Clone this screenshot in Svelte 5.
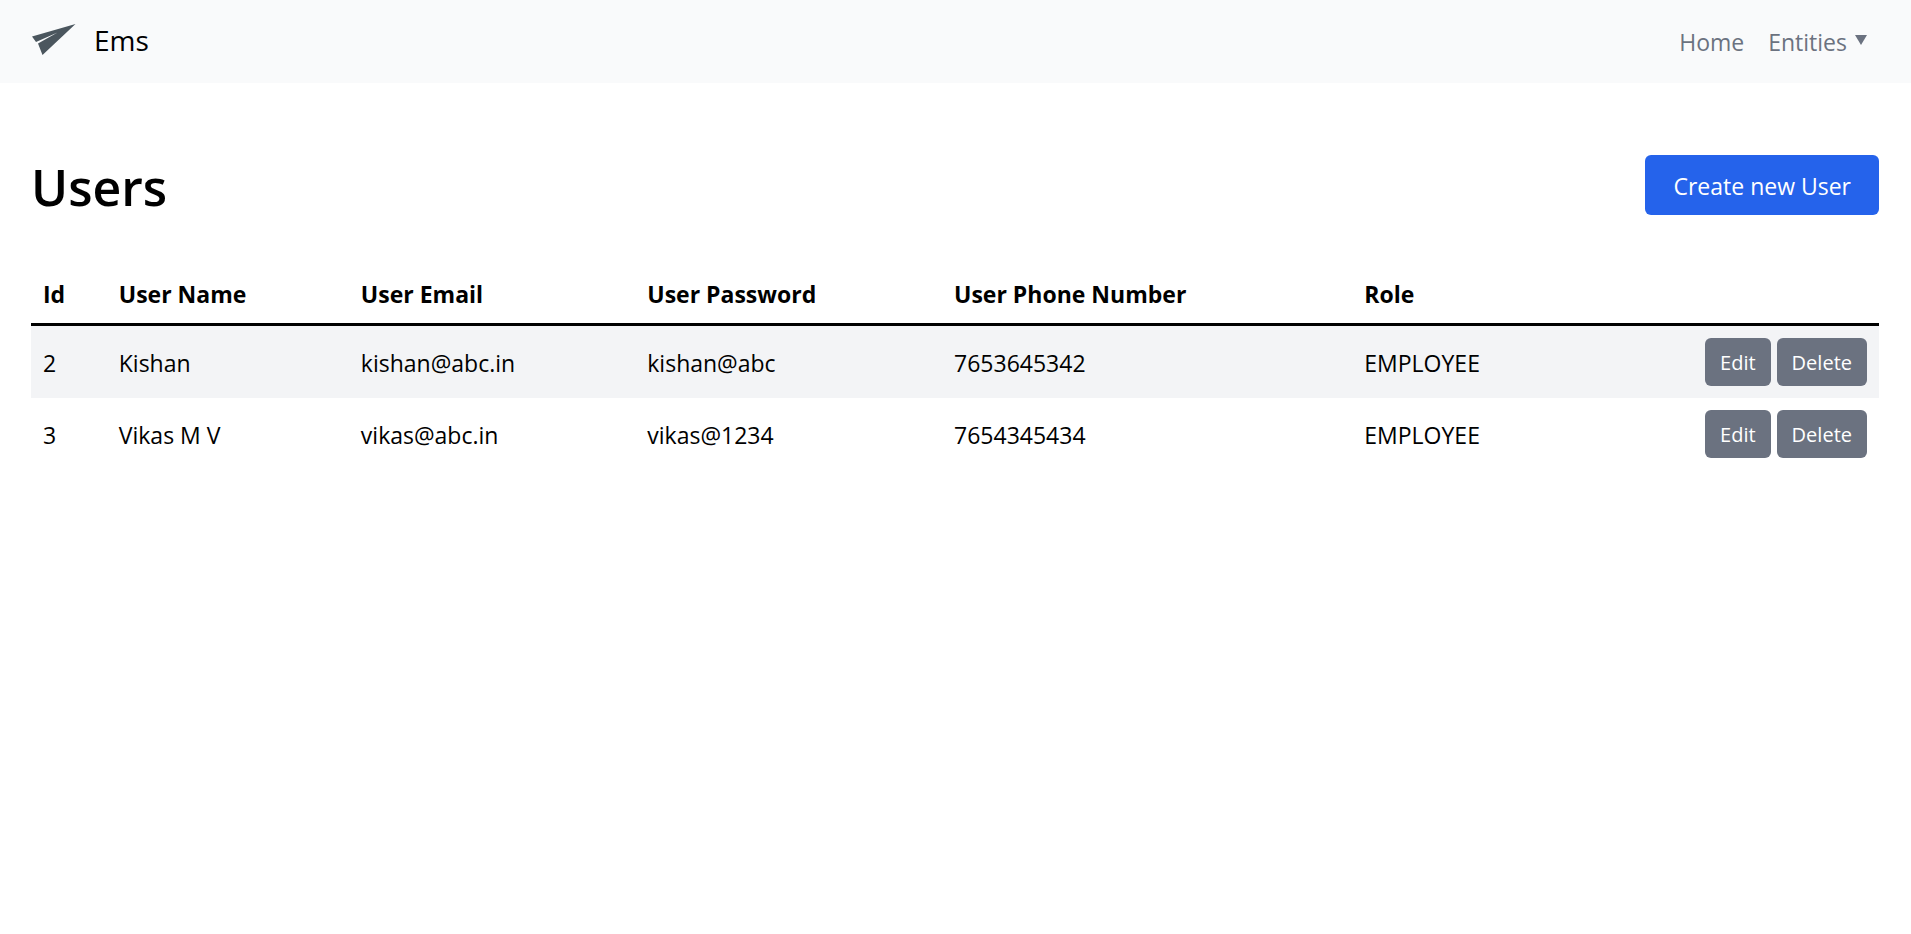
<script>
  const users = [
    { id: 2, name: 'Kishan', email: 'kishan@abc.in', password: 'kishan@abc', phone: '7653645342', role: 'EMPLOYEE' },
    { id: 3, name: 'Vikas M V', email: 'vikas@abc.in', password: 'vikas@1234', phone: '7654345434', role: 'EMPLOYEE' }
  ];
</script>

<header>
  <a class="brand" href="#home">
    <svg width="44" height="32" viewBox="0 0 44 32" aria-hidden="true">
      <path fill="#4b565e" d="M43.500 0 0 12.500l4 5.500L25.500 8.500 6 19.500 10.500 31z" />
    </svg>
    <span>Ems</span>
  </a>
  <nav>
    <a href="#home">Home</a>
    <button class="menu" type="button" aria-haspopup="true">
      Entities
      <svg width="12" height="10" viewBox="0 0 12 10" aria-hidden="true"><path fill="#6b7280" d="M0 0h12L6 10z" /></svg>
    </button>
  </nav>
</header>

<main>
  <div class="heading">
    <h1>Users</h1>
    <a class="create" href="#add">Create new User</a>
  </div>
  <table>
    <colgroup>
      <col class="id" /><col class="name" /><col class="email" /><col class="password" /><col class="phone" /><col />
      <col class="actions" />
    </colgroup>
    <thead>
      <tr>
        <th scope="col">Id</th>
        <th scope="col">User Name</th>
        <th scope="col">User Email</th>
        <th scope="col">User Password</th>
        <th scope="col">User Phone Number</th>
        <th scope="col">Role</th>
        <td></td>
      </tr>
    </thead>
    <tbody>
      {#each users as user (user.id)}
        <tr>
          <td>{user.id}</td>
          <td>{user.name}</td>
          <td>{user.email}</td>
          <td>{user.password}</td>
          <td>{user.phone}</td>
          <td>{user.role}</td>
          <td class="controls">
            <div class="buttons">
              <a href="#edit-{user.id}">Edit</a>
              <button type="button">Delete</button>
            </div>
          </td>
        </tr>
      {/each}
    </tbody>
  </table>
</main>

<style>
  :global(body) {
    margin: 0;
    background: #fff;
    color: #000;
    font: 23px/36px "Open Sans", "Noto Sans", sans-serif;
  }
  a { color: inherit; text-decoration: none; }
  button { border: 0; background: none; font: inherit; color: inherit; cursor: pointer; }
  header {
    display: flex;
    justify-content: space-between;
    align-items: center;
    padding: 0 44px 0 32px;
    height: 83px;
    background: #f9fafb;
  }
  .brand { display: flex; align-items: center; gap: 18px; padding-bottom: 4px; font-size: 28px; }
  nav { display: flex; gap: 24px; color: #6b7280; }
  .menu { display: flex; align-items: center; gap: 8px; padding: 0; }
  .menu svg { margin-bottom: 4px; }
  main { padding: 72px 32px 48px 31px; }
  .heading {
    display: flex;
    justify-content: space-between;
    align-items: flex-start;
    margin-bottom: 44px;
  }
  h1 { margin: 0; font-size: 50px; line-height: 64px; font-weight: 600; }
  .create {
    padding: 13px 28px 11px;
    border-radius: 6px;
    background: #2563eb;
    color: #fff;
  }
  table { width: 100%; table-layout: fixed; border-collapse: separate; border-spacing: 0; }
  .id { width: 4.1%; }
  .name { width: 13.1%; }
  .email { width: 15.5%; }
  .password { width: 16.6%; }
  .phone { width: 22.2%; }
  .actions { width: 190px; }
  th, td { padding: 13px 12px 11px; text-align: left; white-space: nowrap; }
  thead th, thead td { border-bottom: 3px solid #000; }
  th { font-weight: 700; }
  tbody tr:nth-child(odd) { background: #f3f4f6; }
  .controls { padding: 12px; }
  .buttons { display: flex; justify-content: flex-end; gap: 6px; }
  .buttons a, .buttons button {
    padding: 7px 15px 5px;
    border-radius: 6px;
    background: #6b7280;
    color: #fff;
    font-size: 20px;
  }
</style>
